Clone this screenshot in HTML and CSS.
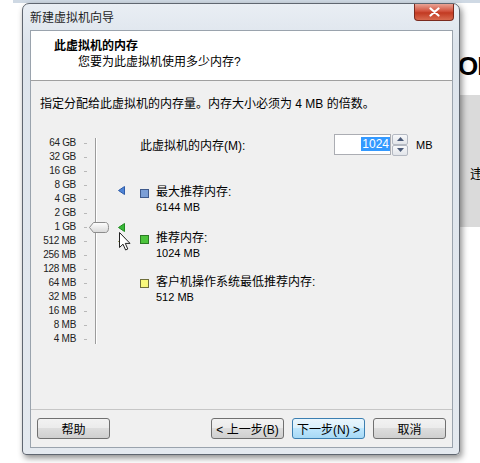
FILE: index.html
```html
<!DOCTYPE html>
<html>
<head>
  <meta charset="UTF-8">
  <title>新建虚拟机向导</title>
  <link rel="stylesheet" href="styles.css">
</head>
<body>
  <div class="desk">
    <div class="bg-strip"></div>
    <div class="bg-page">
      <div class="bg-title">ON</div>
      <div class="bg-band">违</div>
    </div>

    <div class="window">
      <div class="titlebar">
        <span class="title">新建虚拟机向导</span>
        <button class="close">
          <svg width="11" height="10" viewBox="0 0 11 10"><path d="M1.5 1.5 L9.5 8.5 M9.5 1.5 L1.5 8.5" stroke="#fff" stroke-width="2.2" stroke-linecap="round"/></svg>
        </button>
      </div>

      <div class="client">
        <div class="header">
          <h1>此虚拟机的内存</h1>
          <p>您要为此虚拟机使用多少内存?</p>
        </div>

        <div class="content">
          <p class="intro">指定分配给此虚拟机的内存量。内存大小必须为 4 MB 的倍数。</p>

          <div class="mem">
            <div class="scale">
              <div class="mark">64 GB</div>
              <div class="mark">32 GB</div>
              <div class="mark">16 GB</div>
              <div class="mark">8 GB</div>
              <div class="mark">4 GB</div>
              <div class="mark">2 GB</div>
              <div class="mark">1 GB</div>
              <div class="mark">512 MB</div>
              <div class="mark">256 MB</div>
              <div class="mark">128 MB</div>
              <div class="mark">64 MB</div>
              <div class="mark">32 MB</div>
              <div class="mark">16 MB</div>
              <div class="mark">8 MB</div>
              <div class="mark">4 MB</div>
            </div>

            <div class="slider">
              <div class="track"></div>
              <svg class="thumb" width="20" height="11" viewBox="0 0 20 11">
                <defs>
                  <linearGradient id="tg" x1="0" y1="0" x2="0" y2="1">
                    <stop offset="0" stop-color="#ffffff"/>
                    <stop offset="1" stop-color="#d8d8d8"/>
                  </linearGradient>
                </defs>
                <path d="M4.5 0.5 H16.5 Q19.5 0.5 19.5 5.5 Q19.5 10.5 16.5 10.5 H4.5 L0.5 5.5 Z" fill="url(#tg)" stroke="#8c8c8c"/>
              </svg>
              <svg class="tri tri-max" width="7" height="9" viewBox="0 0 7 9"><path d="M0.5 4.5 L6.5 0.5 V8.5 Z" fill="#4f84d6" stroke="#2f5ca8"/></svg>
              <svg class="tri tri-rec" width="7" height="9" viewBox="0 0 7 9"><path d="M0.5 4.5 L6.5 0.5 V8.5 Z" fill="#38b838" stroke="#1f8a1f"/></svg>
              <svg class="tri tri-min" width="7" height="9" viewBox="0 0 7 9"><path d="M0.5 4.5 L6.5 0.5 V8.5 Z" fill="#f2f27a" stroke="#8a8a40"/></svg>
              <svg class="cursor" width="12" height="19" viewBox="0 0 12 19"><path d="M0.5 0.5 V15.5 L4 12.2 L6.6 18 L8.8 17 L6.3 11.4 H11 Z" fill="#fff" stroke="#222" stroke-linejoin="round"/></svg>
            </div>

            <div class="info">
              <div class="amount">
                <span class="amount-label">此虚拟机的内存(M):</span>
                <div class="spin">
                  <div class="field"><span class="sel">1024</span></div>
                  <div class="arrows">
                    <span class="arrow"><svg width="7" height="4" viewBox="0 0 7 4"><path d="M0 4 L3.5 0 L7 4 Z" fill="#4a5a78"/></svg></span>
                    <span class="arrow"><svg width="7" height="4" viewBox="0 0 7 4"><path d="M0 0 L3.5 4 L7 0 Z" fill="#4a5a78"/></svg></span>
                  </div>
                </div>
                <span class="unit">MB</span>
              </div>

              <div class="item item-max">
                <span class="swatch blue"></span>
                <div>
                  <div>最大推荐内存:</div>
                  <div class="num">6144 MB</div>
                </div>
              </div>
              <div class="item item-rec">
                <span class="swatch green"></span>
                <div>
                  <div>推荐内存:</div>
                  <div class="num">1024 MB</div>
                </div>
              </div>
              <div class="item item-min">
                <span class="swatch yellow"></span>
                <div>
                  <div>客户机操作系统最低推荐内存:</div>
                  <div class="num">512 MB</div>
                </div>
              </div>
            </div>
          </div>
        </div>

        <div class="footer">
          <button class="btn">帮助</button>
          <div class="nav">
            <button class="btn">&lt; 上一步(B)</button>
            <button class="btn btn-default">下一步(N) &gt;</button>
            <button class="btn">取消</button>
          </div>
        </div>
      </div>
    </div>
  </div>
</body>
</html>
```

FILE: styles.css
```css
body {
  margin: 0;
  background: #fff;
  font-family: "Liberation Sans", "Noto Sans CJK SC", sans-serif;
  font-size: 12px;
  color: #000;
}

.desk {
  position: relative;
  width: 480px;
  height: 463px;
  overflow: hidden;
}

.bg-strip {
  height: 3px;
  margin-left: 13px;
  background: #cfd9e4;
}

.bg-page {
  margin-left: 458px;
}
.bg-title {
  margin-top: 48px;
  font-size: 26px;
  font-weight: bold;
  line-height: 30px;
  letter-spacing: -1px;
}
.bg-band {
  margin-top: 14px;
  height: 132px;
  background: #dadada;
  padding: 68px 0 0 12px;
  box-sizing: border-box;
  font-size: 13px;
}

/* dialog window */
.window {
  position: absolute;
  left: 22px;
  top: 3px;
  width: 438px;
  height: 452px;
  box-sizing: border-box;
  padding: 0 6px 6px 7px;
  display: flex;
  flex-direction: column;
  background: linear-gradient(#e9eef4, #dde4ec 40px, #e4e9ef);
  border: 1px solid #5f6670;
  border-radius: 7px 7px 4px 4px;
  box-shadow: 2px 3px 6px rgba(0, 0, 0, 0.45);
}

.titlebar {
  height: 26px;
  display: flex;
  align-items: flex-start;
  justify-content: space-between;
}
.title {
  margin-top: 4px;
  font-size: 12px;
  color: #1e1e1e;
}
.close {
  width: 40px;
  height: 17px;
  margin-right: -1px;
  padding: 0;
  border: 1px solid #7a2a1e;
  border-top: none;
  border-radius: 0 0 4px 4px;
  background: linear-gradient(#e9a395, #d2533e 45%, #c23a22 55%, #d86a4f);
  display: flex;
  align-items: center;
  justify-content: center;
}

.client {
  flex: 1;
  display: flex;
  flex-direction: column;
  border: 1px solid #9aa3ad;
  background: #f0f0f0;
}

.header {
  height: 50px;
  box-sizing: border-box;
  background: #fff;
  border-bottom: 1px solid #a0a0a0;
  padding: 7px 0 0 23px;
}
.header h1 {
  margin: 0;
  font-size: 12px;
  font-weight: bold;
  line-height: 16px;
}
.header p {
  margin: 0 0 0 24px;
  line-height: 16px;
}

.content {
  flex: 1;
  padding: 0 0 0 9px;
}
.intro {
  margin: 15px 0 0;
  line-height: 16px;
}

.mem {
  display: flex;
  margin-top: 22px;
}

.scale {
  width: 47px;
  padding-top: 2px;
}
.mark {
  height: 14px;
  line-height: 14px;
  font-size: 10px;
  letter-spacing: -0.3px;
  color: #222;
  display: flex;
  justify-content: flex-end;
  align-items: center;
}
.mark::after {
  content: "";
  width: 3px;
  height: 1px;
  margin-left: 8px;
  background: #b8b8b8;
}

.slider {
  position: relative;
  width: 53px;
}
.track {
  position: absolute;
  left: 8px;
  top: 4px;
  width: 1px;
  height: 206px;
  background: #9c9c9c;
  border-right: 1px solid #fff;
}
.thumb {
  position: absolute;
  left: 2px;
  top: 88px;
}
.tri {
  position: absolute;
  left: 31px;
}
.tri-max { top: 52px; }
.tri-rec { top: 89px; }
.tri-min { top: 103px; }
.cursor {
  position: absolute;
  left: 32px;
  top: 98px;
}

.info {
  flex: 1;
}
.amount {
  display: flex;
  align-items: center;
  height: 21px;
}
.amount-label {
  width: 194px;
}
.spin {
  display: flex;
}
.field {
  width: 55px;
  height: 19px;
  border: 1px solid #abadb3;
  background: #fff;
  display: flex;
  justify-content: flex-end;
  align-items: center;
}
.sel {
  background: #3399ff;
  color: #fff;
  font-size: 12px;
  line-height: 14px;
  padding: 0 1px;
}
.arrows {
  display: flex;
  flex-direction: column;
  margin-left: 1px;
}
.arrow {
  width: 14px;
  height: 9px;
  border: 1px solid #b4b9c2;
  border-radius: 2px;
  background: linear-gradient(#f7f8fa, #e2e5ea);
  display: flex;
  align-items: center;
  justify-content: center;
}
.unit {
  margin-left: 8px;
  font-size: 11px;
}

.item {
  display: flex;
  align-items: flex-start;
  line-height: 15px;
}
.item-max { margin-top: 30px; }
.item-rec { margin-top: 16px; }
.item-min { margin-top: 14px; }
.num {
  font-size: 11px;
}
.swatch {
  width: 7px;
  height: 7px;
  margin: 4px 7px 0 0;
  border: 1px solid #555;
}
.swatch.blue { background: #7c9fd6; border-color: #3f5a8c; }
.swatch.green { background: #4cc43c; border-color: #2b7a24; }
.swatch.yellow { background: #f8f87c; border-color: #6e6e3a; }

.footer {
  height: 38px;
  border-top: 1px solid #c6c6c6;
  display: flex;
  justify-content: space-between;
  align-items: flex-start;
  padding: 8px 6px 0 6px;
  box-sizing: border-box;
}
.nav {
  display: flex;
  gap: 8px;
}
.btn {
  width: 73px;
  height: 21px;
  padding: 0;
  font-family: "Liberation Sans", "Noto Sans CJK SC", sans-serif;
  font-size: 12px;
  color: #000;
  border: 1px solid #707070;
  border-radius: 3px;
  background: linear-gradient(#f2f2f2, #ebebeb 50%, #dddddd 50%, #cfcfcf);
}
.btn-default {
  border-color: #3c7fb1;
  background: linear-gradient(#eaf6fd, #d9f0fc 50%, #bee6fd 50%, #a7d9f5);
}
```
